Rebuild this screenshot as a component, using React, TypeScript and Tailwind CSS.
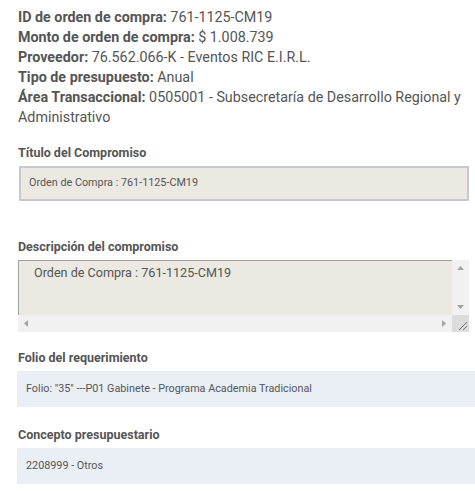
export default function App() {
  const header = [
    { k: 'ID de orden de compra:', v: '761-1125-CM19' },
    { k: 'Monto de orden de compra:', v: '$ 1.008.739' },
    { k: 'Proveedor:', v: '76.562.066-K - Eventos RIC E.I.R.L.' },
    { k: 'Tipo de presupuesto:', v: 'Anual' },
    { k: 'Área Transaccional:', v: '0505001 - Subsecretaría de Desarrollo Regional y Administrativo' },
  ];

  return (
    <div className="min-h-[500px] bg-white pl-[18px] pt-[7px] text-[#555555] font-['Roboto',sans-serif]">
      {/* Header info */}
      <div className="text-[14.3px] leading-[20px] pr-[4px]">
        {header.map((h) => (
          <p key={h.k}>
            <b>{h.k}</b> {h.v}
          </p>
        ))}
      </div>

      {/* Título */}
      <div className="mt-[17px] mb-[4px] text-[12.5px] leading-[18px] font-bold">Título del Compromiso</div>
      <div className="ml-px w-[450px] h-[35px] border-2 border-[#c6c9d1] bg-[#ebe9e2] px-[8px] flex items-center text-[10.8px]">
        Orden de Compra : 761-1125-CM19
      </div>

      {/* Descripción */}
      <div className="mt-[37px] mb-[4px] text-[12.5px] leading-[18px] font-bold">Descripción del compromiso</div>
      <div className="w-[451px] h-[72px] flex flex-col">
        <div className="flex flex-1">
          <div className="flex-1 border-t border-l border-[#a0a0a0] bg-[#ebe9e2] pl-[15px] pt-[3px] text-[12.6px] leading-[18px]">
            Orden de Compra : 761-1125-CM19
          </div>
          <div className="w-[17px] bg-[#f1f1f1] flex flex-col items-center justify-between py-[6px]">
            <svg width="7" height="4" viewBox="0 0 7 4"><path d="M0 4 L3.5 0 L7 4 Z" fill="#a3a3a3" /></svg>
            <svg width="7" height="4" viewBox="0 0 7 4"><path d="M0 0 L7 0 L3.5 4 Z" fill="#a3a3a3" /></svg>
          </div>
        </div>
        <div className="flex h-[17px]">
          <div className="flex-1 bg-[#f1f1f1] flex items-center justify-between px-[6px]">
            <svg width="4" height="7" viewBox="0 0 4 7"><path d="M4 0 L0 3.5 L4 7 Z" fill="#a3a3a3" /></svg>
            <svg width="4" height="7" viewBox="0 0 4 7"><path d="M0 0 L4 3.5 L0 7 Z" fill="#a3a3a3" /></svg>
          </div>
          <div className="w-[17px] bg-[#dcdcdc] flex items-end justify-end p-[2px]">
            <svg width="9" height="9" viewBox="0 0 9 9">
              <path d="M1 9 L9 1 M5 9 L9 5" stroke="#6e6e6e" strokeWidth="1" />
            </svg>
          </div>
        </div>
      </div>

      {/* Folio */}
      <div className="mt-[17px] mb-[4px] text-[12.5px] leading-[18px] font-bold">Folio del requerimiento</div>
      <div className="-ml-px h-[36px] bg-[#eaeff6] pl-[9px] flex items-center text-[10.8px]">
        Folio: "35" ---P01 Gabinete - Programa Academia Tradicional
      </div>

      {/* Concepto */}
      <div className="mt-[19px] mb-[4px] text-[12.5px] leading-[18px] font-bold">Concepto presupuestario</div>
      <div className="-ml-px h-[36px] bg-[#eaeff6] pl-[9px] flex items-center text-[10.8px]">
        2208999 - Otros
      </div>
    </div>
  );
}
